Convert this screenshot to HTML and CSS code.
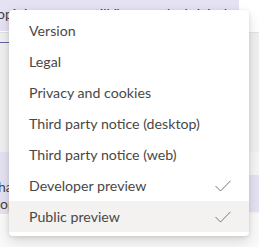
FILE: index.html
```html
<!DOCTYPE html>
<html lang="en">
<head>
	<meta charset="UTF-8">
	<title>About menu</title>
	<link rel="stylesheet" href="styles.css">
</head>
<body>
<div class="chat">
	<div class="row-top">
		<div class="bubble top">opinions om en till är ute och skrivit det</div>
		<div class="top-rest"></div>
	</div>
	<div class="row-grey">
		<div class="tab-line"></div>
	</div>
	<div class="row-msgs">
		<div class="bubble left">ha<br>op</div>
		<div class="gap"></div>
		<div class="bubble right">om<br>era</div>
	</div>
	<div class="row-bottom"></div>
</div>

<div class="menu">
	<div class="item">Version</div>
	<div class="item">Legal</div>
	<div class="item">Privacy and cookies</div>
	<div class="item">Third party notice (desktop)</div>
	<div class="item">Third party notice (web)</div>
	<div class="item">Developer preview
		<svg class="check" width="16" height="12" viewBox="0 0 16 12"><path d="M0.5 6 L5.5 11 L15.5 0.8" fill="none" stroke="#797775" stroke-width="1"/></svg>
	</div>
	<div class="item active">Public preview
		<svg class="check" width="16" height="12" viewBox="0 0 16 12"><path d="M0.5 6 L5.5 11 L15.5 0.8" fill="none" stroke="#797775" stroke-width="1"/></svg>
	</div>
</div>
</body>
</html>
```

FILE: styles.css
```css
body {
	margin: 0;
	width: 259px;
	height: 247px;
	overflow: hidden;
	position: relative;
	background: #fafafa;
	font-family: Lato, "Open Sans", sans-serif;
}
.chat {
	display: flex;
	flex-direction: column;
}
.bubble {
	background: #e5e3f3;
	color: #424242;
	font-size: 14px;
	line-height: 17px;
	overflow: hidden;
	white-space: nowrap;
}
.row-top {
	display: flex;
	height: 32px;
	border-bottom: 1px solid #e3e3e3;
	background: #fff;
}
.bubble.top {
	width: 239px;
	height: 31px;
	padding-top: 5px;
	box-sizing: border-box;
	text-indent: -3px;
}
.top-rest {
	flex: 1;
}
.row-grey {
	height: 119px;
	background: #f0f0f0;
}
.tab-line {
	margin-top: 9px;
	width: 10px;
	height: 1px;
	background: #6264a7;
}
.row-msgs {
	display: flex;
	align-items: flex-start;
	height: 62px;
	background: #f5f5f5;
}
.bubble.left {
	width: 120px;
	height: 62px;
	padding-top: 26px;
	box-sizing: border-box;
	text-indent: -2px;
}
.gap {
	flex: 1;
}
.bubble.right {
	width: 100px;
	height: 37px;
	margin-top: 23px;
	padding-left: 2px;
	padding-top: 3px;
	box-sizing: border-box;
}
.row-bottom {
	flex: 1;
	background: #fafafa;
}
.menu {
	position: absolute;
	left: 9px;
	top: 10px;
	width: 240px;
	padding: 5px 0 4px;
	background: #fff;
	border-radius: 4px;
	box-shadow: 0 6px 14px rgba(0, 0, 0, 0.13), 0 1px 4px rgba(0, 0, 0, 0.11);
}
.item {
	height: 31px;
	display: flex;
	align-items: center;
	padding: 0 18px 0 20px;
	font-size: 14.2px;
	color: #4a4846;
}
.item.active {
	background: #f3f2f1;
}
.check {
	margin-left: auto;
}
```
